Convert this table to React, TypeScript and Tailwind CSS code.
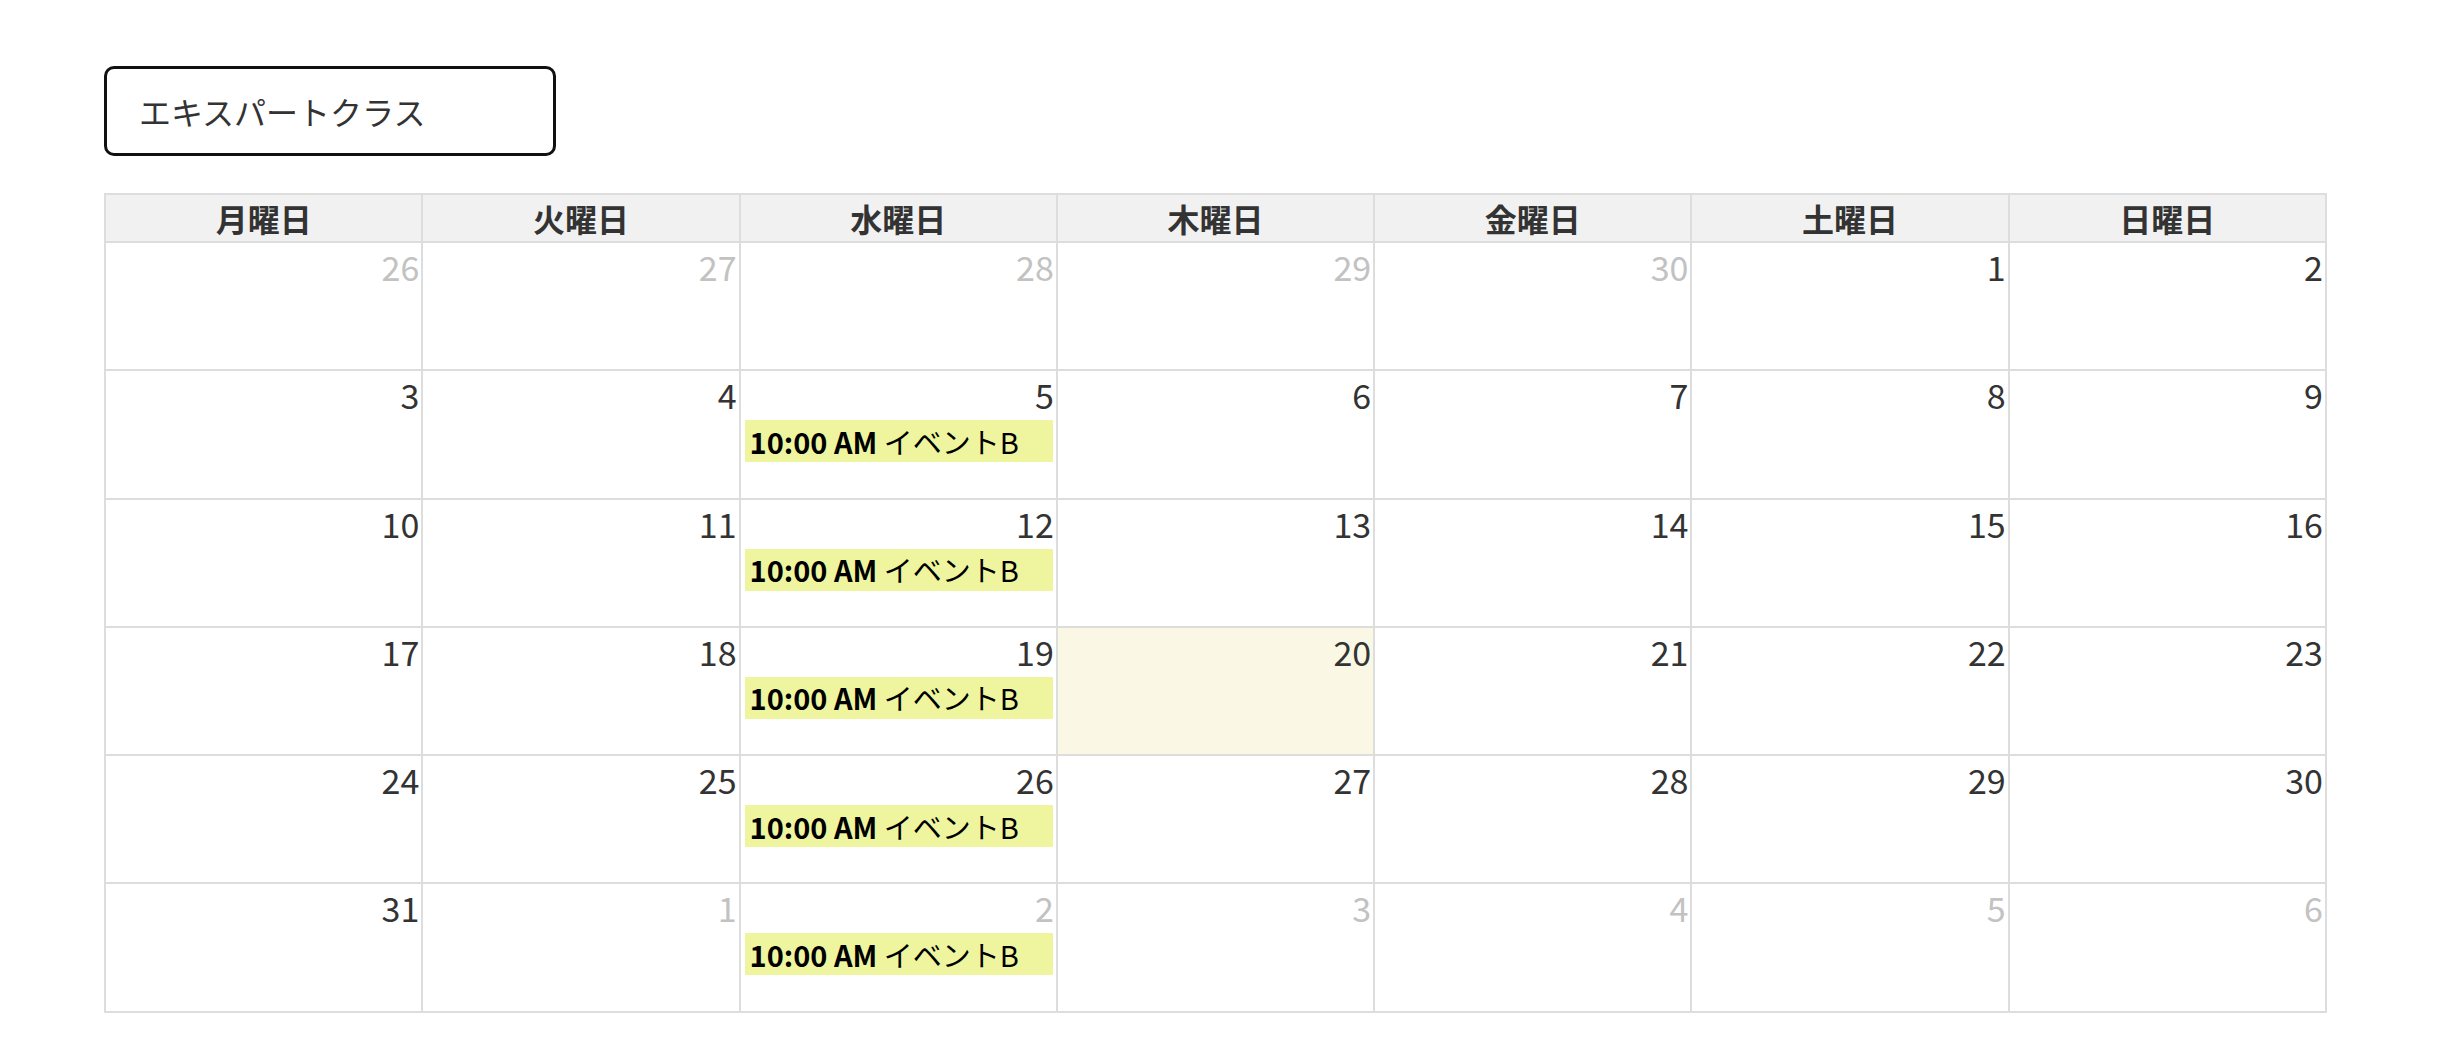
import React from "react";

type Day = { n: number; other?: boolean; today?: boolean; event?: boolean };

const weeks: Day[][] = [
  [
    { n: 26, other: true },
    { n: 27, other: true },
    { n: 28, other: true },
    { n: 29, other: true },
    { n: 30, other: true },
    { n: 1 },
    { n: 2 },
  ],
  [{ n: 3 }, { n: 4 }, { n: 5, event: true }, { n: 6 }, { n: 7 }, { n: 8 }, { n: 9 }],
  [{ n: 10 }, { n: 11 }, { n: 12, event: true }, { n: 13 }, { n: 14 }, { n: 15 }, { n: 16 }],
  [{ n: 17 }, { n: 18 }, { n: 19, event: true }, { n: 20, today: true }, { n: 21 }, { n: 22 }, { n: 23 }],
  [{ n: 24 }, { n: 25 }, { n: 26, event: true }, { n: 27 }, { n: 28 }, { n: 29 }, { n: 30 }],
  [
    { n: 31 },
    { n: 1, other: true },
    { n: 2, other: true, event: true },
    { n: 3, other: true },
    { n: 4, other: true },
    { n: 5, other: true },
    { n: 6, other: true },
  ],
];

const days = ["月曜日", "火曜日", "水曜日", "木曜日", "金曜日", "土曜日", "日曜日"];

export default function App() {
  return (
    <div
      className="min-h-[1060px] bg-white pl-[104px] pt-[66px]"
      style={{ fontFamily: '"Noto Sans CJK JP", "Noto Sans", sans-serif' }}
    >
      <input
        readOnly
        defaultValue="エキスパートクラス"
        className="block h-[90px] w-[452px] rounded-[10px] border-[3px] border-[#111] bg-white pl-[32px] text-[32px] text-[#333] outline-none"
        style={{ fontFamily: '"Noto Sans CJK JP", sans-serif' }}
      />

      <div className="mt-[37px] w-[2223px] border-l-2 border-t-2 border-[#ddd]">
        <div className="grid grid-cols-7">
          {days.map((d) => (
            <div
              key={d}
              className="h-[48px] border-b-2 border-r-2 border-[#ddd] bg-[#f1f1f1] text-center text-[32px] font-bold leading-[46px] text-[#333]"
            >
              {d}
            </div>
          ))}
        </div>
        {weeks.map((w, i) => (
          <div key={i} className="grid grid-cols-7">
            {w.map((d, j) => (
              <div
                key={j}
                className={`h-[128.3px] border-b-2 border-r-2 border-[#ddd] ${
                  d.today ? "bg-[#faf7e4]" : "bg-white"
                }`}
              >
                <div
                  className={`h-[47px] pr-[2px] text-right text-[34px] leading-[47px] ${
                    d.other ? "text-[#c2c2c2]" : "text-[#333]"
                  }`}
                >
                  {d.n}
                </div>
                {d.event && (
                  <div className="ml-[4px] mr-[3px] mt-[2px] flex h-[42px] items-center bg-[#eef59e] pl-[5px] text-[29px] leading-none text-black">
                    <span className="font-bold">10:00 AM</span>
                    <span>&nbsp;イベントB</span>
                  </div>
                )}
              </div>
            ))}
          </div>
        ))}
      </div>
    </div>
  );
}
